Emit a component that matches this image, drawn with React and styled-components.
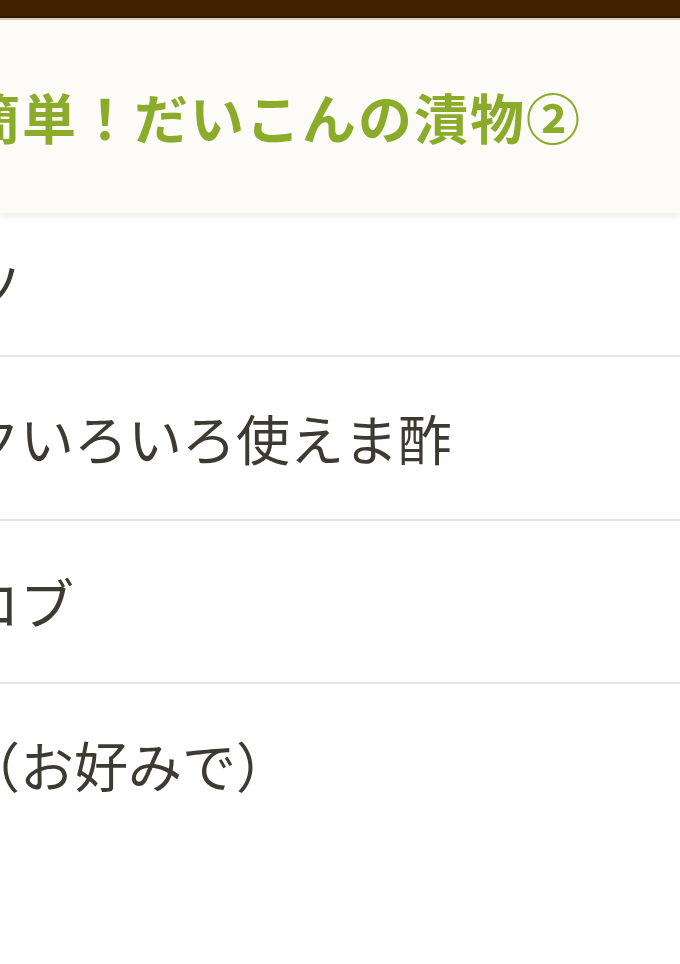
import React from "react";
import styled, { createGlobalStyle } from "styled-components";

const GlobalStyle = createGlobalStyle`
  html, body {
    margin: 0;
    padding: 0;
    background: #ffffff;
    overflow: hidden;
  }
  body {
    font-family: "Noto Sans CJK JP", "Noto Sans", sans-serif;
  }
`;

const Page = styled.div`
  width: 680px;
  height: 964px;
  display: flex;
  flex-direction: column;
  overflow: hidden;
  background: #ffffff;
`;

const StatusBar = styled.div`
  height: 16px;
  flex: none;
  background: #432000;
  border-bottom: 2px solid #2f1700;
  box-shadow: 0 2px 0 #d9cbbb;
`;

const Header = styled.header`
  flex: none;
  height: 193px;
  margin-top: 2px;
  display: flex;
  align-items: center;
  background: #fcfbf8;
  box-shadow: 0 3px 8px rgba(0, 0, 0, 0.09);
  position: relative;
  z-index: 1;
`;

const Title = styled.h1`
  margin: 0 0 0 -34px;
  font-size: 54px;
  line-height: 1;
  font-weight: 700;
  letter-spacing: 2px;
  color: #8bab2a;
  white-space: nowrap;
`;

const List = styled.ul`
  list-style: none;
  margin: 0;
  padding: 0;
  display: flex;
  flex-direction: column;
`;

const Row = styled.li`
  height: ${(p) => p.$height}px;
  display: flex;
  align-items: center;
  border-bottom: 2px solid ${(p) => (p.$last ? "transparent" : "#e6e6e4")};
`;

const Label = styled.span`
  margin-left: -34px;
  font-size: 54px;
  line-height: 1;
  font-weight: 400;
  color: #3c3a31;
  white-space: nowrap;
`;

const items = [
  { text: "ツ", height: 142 },
  { text: "クいろいろ使えま酢", height: 162 },
  { text: "コブ", height: 161 },
  { text: "（お好みで）", height: 162, last: true },
];

export default function App() {
  return (
    <>
      <GlobalStyle />
      <Page>
        <StatusBar />
        <Header>
          <Title>簡単！だいこんの漬物②</Title>
        </Header>
        <List>
          {items.map((it, i) => (
            <Row key={i} $height={it.height} $last={it.last}>
              <Label>{it.text}</Label>
            </Row>
          ))}
        </List>
      </Page>
    </>
  );
}
